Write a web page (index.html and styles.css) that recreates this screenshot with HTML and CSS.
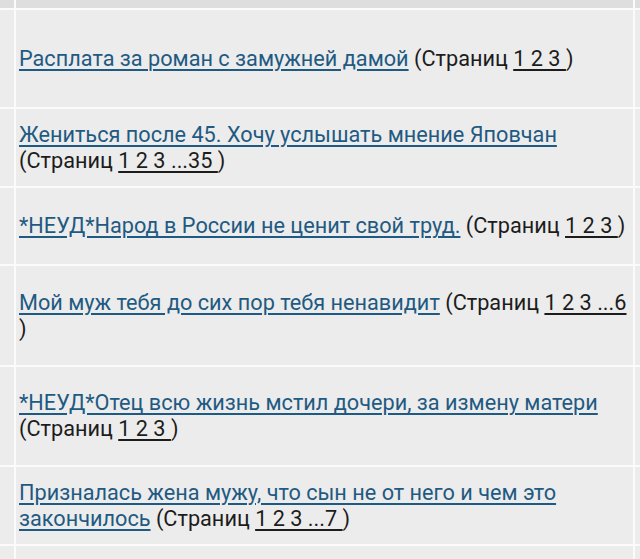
FILE: index.html
```html
<!DOCTYPE html>
<html lang="ru">
<head>
<meta charset="utf-8">
<title>Темы</title>
<link rel="stylesheet" href="styles.css">
</head>
<body>
<div class="topics">
  <div class="cell side head"></div><div class="cell main head"></div><div class="cell extra head"></div>

  <div class="cell side r1"></div>
  <div class="cell main r1"><p><a href="#">Расплата за роман с замужней дамой</a> (Страниц <span class="pages">1 2 3 </span>)</p></div>
  <div class="cell extra r1"></div>

  <div class="cell side r2"></div>
  <div class="cell main r2"><p><a href="#">Жениться после 45. Хочу услышать мнение Яповчан</a> (Страниц <span class="pages">1 2 3 ...35 </span>)</p></div>
  <div class="cell extra r2"></div>

  <div class="cell side r3"></div>
  <div class="cell main r3"><p><a href="#">*НЕУД*Народ в России не ценит свой труд.</a> (Страниц <span class="pages">1 2 3 </span>)</p></div>
  <div class="cell extra r3"></div>

  <div class="cell side r4"></div>
  <div class="cell main r4"><p><a href="#">Мой муж тебя до сих пор тебя ненавидит</a> (Страниц <span class="pages">1 2 3 ...6</span> )</p></div>
  <div class="cell extra r4"></div>

  <div class="cell side r5"></div>
  <div class="cell main r5"><p><a href="#">*НЕУД*Отец всю жизнь мстил дочери, за измену матери</a> (Страниц <span class="pages">1 2 3 </span>)</p></div>
  <div class="cell extra r5"></div>

  <div class="cell side r6"></div>
  <div class="cell main r6"><p><a href="#">Призналась жена мужу, что сын не от него и чем это закончилось</a> (Страниц <span class="pages">1 2 3 ...7 </span>)</p></div>
  <div class="cell extra r6"></div>

  <div class="cell side tail"></div><div class="cell main tail"></div><div class="cell extra tail"></div>
</div>
</body>
</html>
```
FILE: styles.css
```css
html, body {
  margin: 0;
  padding: 0;
  background: #ffffff;
  overflow: hidden;
}

/* topic list: narrow marker column, title column, trailing column */
.topics {
  display: grid;
  grid-template-columns: 14px 617px 5px;
  grid-template-rows: 8px 97px 77px 76px 99px 98px 77px 40px;
  gap: 2px;
  background: #fbfbfb;
  width: 640px;
  font-family: Roboto, "Noto Sans", sans-serif;
  font-size: 21.7px;
  line-height: 26px;
  color: #1c1c1c;
}

.cell {
  background: #ececec;
  display: flex;
  align-items: center;
}

.cell.head {
  background: #dedede;
}

.main {
  padding: 0 3px;
}

.main p {
  margin: 0;
}

a {
  color: #1f5a82;
  text-decoration: underline;
  text-decoration-thickness: 2px;
  text-underline-offset: 3px;
}

.pages {
  white-space: nowrap;
  text-decoration: underline;
  text-decoration-thickness: 2px;
  text-underline-offset: 3px;
}
```
